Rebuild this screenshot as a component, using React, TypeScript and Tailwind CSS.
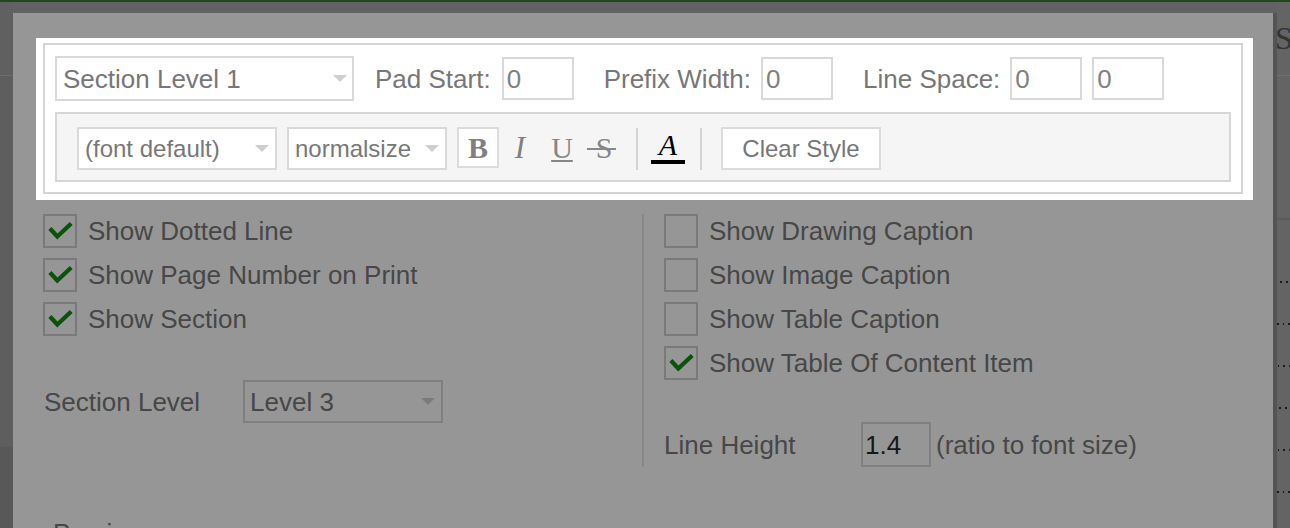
import React from "react";

const SANS = "font-['Liberation_Sans',Arial,Helvetica,sans-serif]";
const SERIF = "font-['Liberation_Serif','Times_New_Roman',serif]";

function LightCaret() {
  return (
    <span className="block w-0 h-0 border-x-[7px] border-x-transparent border-t-[7px] border-t-[#cfcfcf]" />
  );
}

function DimCaret() {
  return (
    <span className="block w-0 h-0 border-x-[7px] border-x-transparent border-t-[7px] border-t-[#7b7b7b]" />
  );
}

function ZeroInput({ className }: { className: string }) {
  return (
    <div
      className={`${className} w-[72px] h-[43px] border-2 border-[#d9d9d9] bg-white pl-[3px] flex items-center text-[26px] leading-[30px] text-[#808080]`}
    >
      0
    </div>
  );
}

function Toolbar() {
  return (
    <div className="mt-[11px] w-[1176px] h-[70px] border-2 border-[#d6d6d6] bg-[#f5f5f5] pl-[20px] pt-[13px] flex items-start">
      <div className="w-[200px] h-[43px] border-2 border-[#d9d9d9] bg-white pl-[6px] pr-[6px] flex items-center justify-between text-[24px] leading-[28px] text-[#777777]">
        <span>(font default)</span>
        <LightCaret />
      </div>
      <div className="ml-[10px] w-[160px] h-[43px] border-2 border-[#d9d9d9] bg-white pl-[6px] pr-[6px] flex items-center justify-between text-[24px] leading-[28px] text-[#777777]">
        <span>normalsize</span>
        <LightCaret />
      </div>
      <div
        className={`ml-[10px] w-[42px] h-[41px] border-2 border-[#dcdcdc] bg-white flex items-center justify-center ${SERIF} font-bold text-[30px] leading-[30px] text-[#808080]`}
      >
        B
      </div>
      <div
        className={`w-[42px] h-[41px] flex items-center justify-center ${SERIF} italic text-[31px] leading-[30px] text-[#7f7f7f]`}
      >
        I
      </div>
      <div
        className={`w-[42px] h-[41px] flex items-center justify-center ${SERIF} text-[30px] leading-[30px] text-[#868686]`}
      >
        <span className="underline decoration-2 underline-offset-[2px]">U</span>
      </div>
      <div
        className={`w-[42px] h-[41px] flex items-center justify-center ${SERIF} text-[30px] leading-[30px] text-[#868686]`}
      >
        <span className="relative">
          S
          <span className="absolute left-[-9px] right-[-4px] top-[15px] h-[2px] bg-[#888888]" />
        </span>
      </div>
      <div className="ml-[11px] mt-px w-[2px] h-[42px] bg-[#d4d4d4]" />
      <div className="ml-[9px] w-[42px] h-[41px] pt-[6px] flex flex-col items-center">
        <span className={`${SERIF} italic text-[30px] leading-[24px] text-black`}>A</span>
        <span className="mt-[3px] w-[34px] h-[4px] bg-black" />
      </div>
      <div className="ml-[11px] mt-px w-[2px] h-[42px] bg-[#d4d4d4]" />
      <div className="ml-[19px] w-[160px] h-[43px] border-2 border-[#dcdcdc] bg-white flex items-center justify-center text-[24px] leading-[28px] text-[#777777]">
        Clear Style
      </div>
    </div>
  );
}

function StyleBar() {
  return (
    <div className="shrink-0 w-[1217px] h-[162px] bg-white pt-[5px] pl-[7px]">
      <div className="w-[1200px] h-[151px] border-2 border-[#d5d5d5] pl-[10px] pt-[11px]">
        <div className="flex items-center h-[45px] text-[26px] leading-[30px] text-[#777777] whitespace-nowrap">
          <div className="w-[299px] h-[45px] border-2 border-[#d9d9d9] bg-white pl-[6px] pr-[5px] flex items-center justify-between">
            <span>Section Level 1</span>
            <LightCaret />
          </div>
          <span className="ml-[21px]">Pad Start:</span>
          <ZeroInput className="ml-[11px]" />
          <span className="ml-[30px]">Prefix Width:</span>
          <ZeroInput className="ml-[10px]" />
          <span className="ml-[30px]">Line Space:</span>
          <ZeroInput className="ml-[10px]" />
          <ZeroInput className="ml-[10px]" />
        </div>
        <Toolbar />
      </div>
    </div>
  );
}

function DimCheck({ checked, label }: { checked: boolean; label: string }) {
  return (
    <div className="flex items-center h-[34px]">
      <div className="w-[34px] h-[34px] border-2 border-[#7a7a7a] shrink-0">
        {checked && (
          <svg width="30" height="30" viewBox="0 0 30 30">
            <path
              d="M6.3 14 L12.3 20.5 L24.7 9"
              fill="none"
              stroke="#0b530b"
              strokeWidth="4.2"
              strokeLinecap="square"
            />
          </svg>
        )}
      </div>
      <span className="ml-[11px] text-[26px] leading-[30px] text-[#474747] whitespace-nowrap">
        {label}
      </span>
    </div>
  );
}

function Options() {
  return (
    <div className="shrink-0 mt-[14px] ml-[7px] flex items-start">
      <div className="w-[599px] flex flex-col gap-[10px]">
        <DimCheck checked label="Show Dotted Line" />
        <DimCheck checked label="Show Page Number on Print" />
        <DimCheck checked label="Show Section" />
        <div className="mt-[34px] h-[43px] flex items-center text-[26px] leading-[30px] text-[#474747] whitespace-nowrap">
          <span className="w-[200px] pl-px">Section Level</span>
          <div className="w-[200px] h-[43px] border-2 border-[#7f7f7f] pl-[5px] pr-[6px] flex items-center justify-between">
            <span>Level 3</span>
            <DimCaret />
          </div>
        </div>
      </div>
      <div className="h-[253px] border-l-2 border-[#878787] pl-[20px] flex flex-col gap-[10px]">
        <DimCheck checked={false} label="Show Drawing Caption" />
        <DimCheck checked={false} label="Show Image Caption" />
        <DimCheck checked={false} label="Show Table Caption" />
        <DimCheck checked label="Show Table Of Content Item" />
        <div className="mt-[32px] h-[45px] flex items-center text-[26px] leading-[30px] text-[#474747] whitespace-nowrap">
          <span className="w-[197px]">Line Height</span>
          <div className="w-[70px] h-[45px] border-2 border-[#7f7f7f] pl-[2px] flex items-center text-[#161616]">
            1.4
          </div>
          <span className="ml-[5px]">(ratio to font size)</span>
        </div>
      </div>
    </div>
  );
}

function LeftEdge() {
  return (
    <div className="w-[13px] flex flex-col">
      <div className="h-[73px] bg-[#606060]" />
      <div className="h-px bg-[#6d6d6d]" />
      <div className="h-[371px] bg-[#5e5e5e]" />
      <div className="flex-1 bg-[#585858]" />
    </div>
  );
}

function Dots({ offset, count }: { offset: string; count: number }) {
  return (
    <div className={`${offset} flex gap-[4px]`}>
      {Array.from({ length: count }).map((_, i) => (
        <span key={i} className="w-[2px] h-[2px] bg-[#1a1a1a]" />
      ))}
    </div>
  );
}

function RightEdge() {
  return (
    <div className="w-[17px] flex">
      <div className="w-[4px] mt-[11px] bg-[#545454]" />
      <div className="w-[13px] bg-[#646464] overflow-hidden flex flex-col">
        <span className={`shrink-0 mt-[20px] -ml-[2px] ${SERIF} text-[32px] leading-[32px] text-[#333333]`}>S</span>
        <div className="shrink-0 mt-[21px] h-px bg-[#6f6f6f]" />
        <div className="shrink-0 mt-[142px] h-[2px] bg-[#5b5b5b]" />
        <div className="shrink-0 mt-[61px] flex flex-col gap-[40px]">
          <Dots offset="ml-[3px]" count={2} />
          <Dots offset="ml-0" count={3} />
          <Dots offset="ml-[1px]" count={3} />
          <Dots offset="ml-[2px]" count={2} />
          <Dots offset="ml-[1px]" count={3} />
          <Dots offset="ml-0" count={3} />
        </div>
      </div>
    </div>
  );
}

export default function App() {
  return (
    <div className={`w-[1290px] h-[528px] overflow-hidden bg-[#626262] ${SANS}`}>
      <div className="h-[2px] bg-[#1e4a1e]" />
      <div className="flex h-[526px]">
        <LeftEdge />
        <div className="w-[1260px] mt-[11px] bg-[#969696] pl-[23px] pt-[25px] flex flex-col overflow-hidden">
          <StyleBar />
          <Options />
          <div className="shrink-0 ml-[17px] mt-[51px] text-[26px] leading-[30px] text-[#474747] whitespace-nowrap">
            Preview
          </div>
        </div>
        <RightEdge />
      </div>
    </div>
  );
}
